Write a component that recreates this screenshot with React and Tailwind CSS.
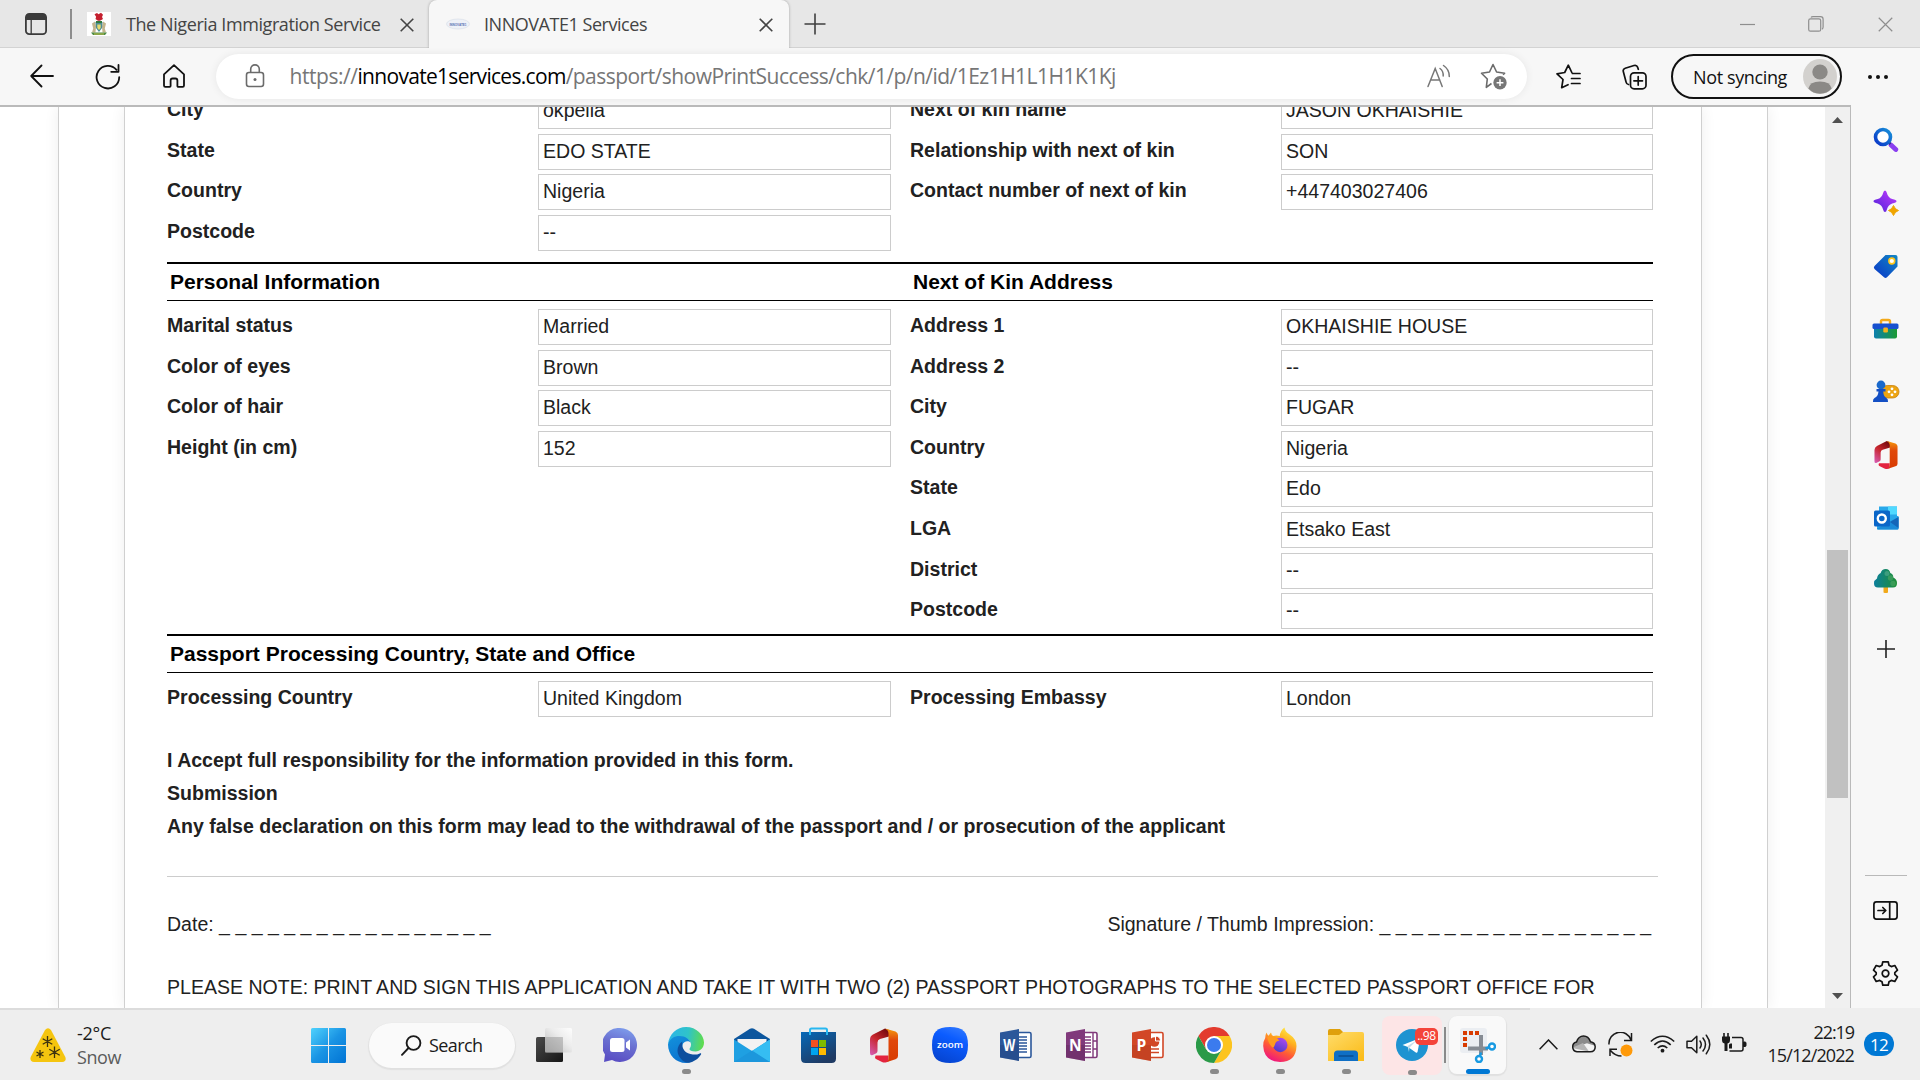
import React from "react";

const UI = "font-['Open_Sans','Noto_Sans',sans-serif]";

/* ---------- browser chrome ---------- */

function Cross({ size = 14, className = "", w = 1.6 }) {
  return (
    <svg width={size} height={size} viewBox="0 0 14 14" className={className} fill="none" stroke="currentColor" strokeWidth={w}>
      <path d="M0.7 0.7 13.3 13.3M13.3 0.7 0.7 13.3" />
    </svg>
  );
}

function TabStrip() {
  return (
    <div className="flex h-12 shrink-0 items-center bg-[#e7e7e7] text-[#444] shadow-[inset_0_-1px_0_#d3d3d3]">
      <svg className="ml-[25px] shrink-0" width="22" height="22" viewBox="0 0 22 22" fill="none">
        <rect x="0.9" y="0.9" width="20.2" height="20.2" rx="3.4" stroke="#3b3b3b" strokeWidth="1.8" />
        <path d="M1 7V4a3 3 0 0 1 3-3h14a3 3 0 0 1 3 3v3z" fill="#3b3b3b" />
        <path d="M6.2 6v15" stroke="#3b3b3b" strokeWidth="1.3" />
      </svg>
      <div className="ml-[23px] h-[30px] w-[2px] shrink-0 bg-[#8d8d8d]" />
      <svg className="ml-[15px] shrink-0" width="24" height="24" viewBox="0 0 24 24">
        <rect width="24" height="24" fill="#fff" />
        <path d="M7.5 2.2 10 1l1.5 1.2L14 .8l2 2-1 2.2 1 2-3 1.8h-2L8.500 7l.6-2.300z" fill="#c4202f" />
        <path d="M5 11.500 8 9.500l1 5-.5 6H5l1.200-4zM19 11.500 16 9.500l-1 5 .5 6H19l-1.200-4z" fill="#c3b48c" />
        <path d="M8.500 10h7l-.5 6-3 4-3-4z" fill="#4d8d94" />
        <path d="M9 9h6v2H9z" fill="#2f7a3d" />
        <path d="M10.300 12.500h3.400v3.500l-1.700 2-1.700-2z" fill="#e6dc70" />
        <path d="M4 20.500h16l-2 2.500H6z" fill="#4d8c46" />
        <path d="M7 21.500h10v1H7z" fill="#c9c04c" />
      </svg>
      <span className="ml-[15px] w-[260px] shrink-0 whitespace-nowrap text-[18px] leading-6 tracking-[-0.415px]">
        The Nigeria Immigration Service
      </span>
      <Cross className="ml-[14px] mt-[2px] shrink-0" size={14} />
      <div className="ml-[15px] flex h-12 w-[360px] shrink-0 items-center rounded-t-lg bg-[#f7f7f7] shadow-[0_0_3px_rgba(0,0,0,0.3)] [clip-path:inset(0_-4px_0_-4px)]">
        <svg className="ml-[17px] shrink-0" width="24" height="12" viewBox="0 0 24 12">
          <ellipse cx="12" cy="6" rx="11.500" ry="5" fill="#eef1f7" stroke="#d5dbe6" strokeWidth="0.6" />
          <text x="12" y="7.500" textAnchor="middle" fontSize="4.200" fontWeight="700" fontFamily="Liberation Sans" fill="#5a70b3" textLength="17" lengthAdjust="spacingAndGlyphs">INNOVATE1</text>
        </svg>
        <span className="ml-[14px] w-[270px] whitespace-nowrap text-[18px] leading-6 tracking-[-0.462px]">INNOVATE1 Services</span>
        <Cross className="ml-[5px] mt-[2px] shrink-0" size={14} />
      </div>
      <svg className="ml-[15px] shrink-0" width="22" height="22" viewBox="0 0 22 22" stroke="#3f3f3f" strokeWidth="1.600">
        <path d="M11 0.500v21M0.500 11h21" />
      </svg>
      <div className="ml-auto flex items-center text-[#8e8e8e]">
        <svg width="15" height="15" viewBox="0 0 15 15" stroke="currentColor" strokeWidth="1.200"><path d="M0 7.500h15" /></svg>
        <svg className="ml-[53px]" width="16" height="16" viewBox="0 0 16 16" fill="none" stroke="currentColor" strokeWidth="1.200">
          <rect x="0.700" y="2.800" width="12" height="12.400" rx="1.800" />
          <path d="M3 1.500Q3.500.7 5 .7h7.500a2.600 2.600 0 0 1 2.600 2.600V11q0 1.500-1 2.200" />
        </svg>
        <Cross className="ml-[54px] mr-[27px]" size={15} w={1.1} />
      </div>
    </div>
  );
}

function Toolbar() {
  return (
    <div className="flex h-[57px] shrink-0 items-center bg-[#f7f7f7] text-[#111]">
      <svg className="ml-[30px] -mt-px shrink-0" width="24" height="24" viewBox="0 0 24 24" fill="none" stroke="currentColor" strokeWidth="1.800" strokeLinecap="round" strokeLinejoin="round">
        <path d="M23 12H1.200M11.500 1.500 1.200 12l10.300 10.500" />
      </svg>
      <svg className="ml-[41px] shrink-0" width="26" height="26" viewBox="0 0 26 26" fill="none" stroke="currentColor" strokeWidth="1.800" strokeLinecap="round" strokeLinejoin="round">
        <path d="M24.200 13.200A11.300 11.300 0 1 1 21.500 5.800M23.500 1v6.800h-7.300" />
      </svg>
      <svg className="ml-[42px] -mt-px shrink-0" width="22" height="24" viewBox="0 0 22 24" fill="none" stroke="currentColor" strokeWidth="1.800" strokeLinejoin="round">
        <path d="M1 10.300 11 1.200l10 9.100V21.500a1.300 1.300 0 0 1-1.300 1.300h-4.400a.9.9 0 0 1-.9-.9v-5.400q0-2-2-2h-2.800q-2 0-2 2v5.400a.9.9 0 0 1-.9.900H2.300A1.300 1.300 0 0 1 1 21.500z" />
      </svg>
      <div className="ml-[31px] flex h-[45px] w-[1311px] shrink-0 items-center rounded-full bg-white shadow-[0_0_8px_rgba(0,0,0,0.07)]">
        <svg className="ml-[29px] -mt-[2px] shrink-0" width="20" height="24" viewBox="0 0 20 24" fill="none" stroke="#6b6b6b" strokeWidth="1.600">
          <rect x="1.500" y="8.500" width="17" height="14" rx="2.400" />
          <path d="M5.700 8.500V5.200a4.300 4.300 0 0 1 8.600 0v3.300" />
          <circle cx="10" cy="15.500" r="1.500" fill="#6b6b6b" stroke="none" />
        </svg>
        <div className="ml-[24.500px] -mt-[2px] flex w-[1123.500px] whitespace-nowrap text-[21px] leading-7 text-[#767676]">
          <span className="tracking-[-0.453px]">https://</span>
          <span className="tracking-[-0.7px] text-black">innovate1services.com</span>
          <span className="tracking-[-0.535px]">/passport/showPrintSuccess/chk/1/p/n/id/1Ez1H1L1H1K1Kj</span>
        </div>
        <svg className="ml-[14px] -mt-px shrink-0" width="24" height="24" viewBox="0 0 24 24" fill="none" stroke="#777" strokeWidth="1.500" strokeLinecap="round">
          <path d="M1 22.500 8.200 4.500 15.200 22.500M3.600 16h9.200M13 4.500q3.500 2.500 3.200 7.500M16.500 1.500q6 4 5.800 11" />
        </svg>
        <svg className="ml-[29px] shrink-0" width="28" height="27" viewBox="0 0 28 27" fill="none" stroke="#6b6b6b" strokeWidth="1.600" strokeLinejoin="round">
          <path d="M11.500 20.500 6.300 24.300 7.300 16 1.500 10.300 9.500 9 13 1.500 16.600 9l8 1.300-1.500 1.500" />
          <circle cx="20" cy="19.700" r="6.700" fill="#767676" stroke="none" />
          <path d="M20 16.300v6.800M16.600 19.700h6.800" stroke="#fff" strokeWidth="1.500" />
        </svg>
      </div>
      <svg className="ml-[29px] shrink-0" width="25" height="25" viewBox="0 0 25 25" fill="none" stroke="currentColor" strokeWidth="1.700" strokeLinejoin="round" strokeLinecap="round">
        <path d="M12 20.700 5.700 23.700 7 15.500 1 9.800 8.700 8.500 12.300 1.200 15.800 8.500M16.500 9.500H24M15.500 14.500H24M15.500 19.500H24" />
      </svg>
      <svg className="ml-[41px] shrink-0" width="25" height="26" viewBox="0 0 25 26" fill="none" stroke="currentColor" strokeWidth="1.700" strokeLinejoin="round" strokeLinecap="round">
        <rect x="8.500" y="8.800" width="15.500" height="16" rx="3.600" />
        <path d="M16.200 12.500v8.600M11.900 16.800h8.600M6.500 20.500q-2-.3-2.500-2.700L1.300 7.500Q.7 5 3.200 4.200L12 1.500q2.800-.7 3.700 1.900l.6 1.900" />
      </svg>
      <div className="ml-[24px] flex h-[45px] w-[171px] shrink-0 items-center rounded-full border-2 border-[#111] text-[18px] tracking-[-0.37px]">
        <span className="ml-[20px] w-[110px] whitespace-nowrap leading-6">Not syncing</span>
        <svg width="34" height="35" viewBox="0 0 34 35" className="shrink-0">
          <ellipse cx="17" cy="17.500" rx="17" ry="17.500" fill="#d3d1ce" />
          <ellipse cx="17" cy="13" rx="7.700" ry="7.600" fill="#8b8986" />
          <path d="M5.300 29.500q1.500-7 11.700-7t11.700 7Q24 34.700 17 34.700T5.300 29.500z" fill="#8b8986" />
        </svg>
      </div>
      <div className="ml-[26px] flex gap-[4px]">
        <i className="size-[4px] rounded-full bg-[#111]" />
        <i className="size-[4px] rounded-full bg-[#111]" />
        <i className="size-[4px] rounded-full bg-[#111]" />
      </div>
    </div>
  );
}

/* ---------- form page ---------- */

function Field({ label, value, wide }) {
  return (
    <div className="flex h-[40.6px]">
      <div className="w-[371px] font-bold leading-8 whitespace-nowrap">{label}</div>
      <div className={(wide ? "w-[372px]" : "w-[353px]") + " h-9 border border-[#ccc] pl-[4px] leading-8"}>{value}</div>
    </div>
  );
}

function Columns({ left, right }) {
  return (
    <div className="flex">
      <div className="w-[743px]">{left.map(([l, v]) => <Field key={l} label={l} value={v} />)}</div>
      <div>{right.map(([l, v]) => <Field key={l} label={l} value={v} wide />)}</div>
    </div>
  );
}

function Heading({ left, right }) {
  return (
    <div className="mb-2 flex h-[39px] w-[1486px] items-center border-t-2 border-b border-black pl-[3px] text-[21px] font-bold text-black">
      <div className="w-[743px] whitespace-nowrap">{left}</div>
      <div className="whitespace-nowrap">{right}</div>
    </div>
  );
}

const DASHES = "_ _ _ _ _ _ _ _ _ _ _ _ _ _ _ _ _";

function FormPage() {
  return (
    <div className="min-w-0 flex-1 overflow-hidden bg-white pr-[57px] pl-[58px]">
      <div className="h-full border-x border-[#d0d0d0] px-[65px] shadow-[0_0_14px_rgba(0,0,0,0.07)]">
        <div className="flow-root h-full border-x border-[#d0d0d0] pl-[42px] shadow-[0_0_14px_rgba(0,0,0,0.07)]">
          <div className="-mt-[14px] flow-root font-['Liberation_Sans',sans-serif] text-[19.550px] text-[#212121]">
            <div className="h-[169px]">
              <Columns
                left={[["City", "okpella"], ["State", "EDO STATE"], ["Country", "Nigeria"], ["Postcode", "--"]]}
                right={[["Next of kin name", "JASON OKHAISHIE"], ["Relationship with next of kin", "SON"], ["Contact number of next of kin", "+447403027406"]]}
              />
            </div>
            <Heading left="Personal Information" right="Next of Kin Address" />
            <div className="h-[325px]">
              <Columns
                left={[["Marital status", "Married"], ["Color of eyes", "Brown"], ["Color of hair", "Black"], ["Height (in cm)", "152"]]}
                right={[["Address 1", "OKHAISHIE HOUSE"], ["Address 2", "--"], ["City", "FUGAR"], ["Country", "Nigeria"], ["State", "Edo"], ["LGA", "Etsako East"], ["District", "--"], ["Postcode", "--"]]}
              />
            </div>
            <Heading left="Passport Processing Country, State and Office" />
            <Columns left={[["Processing Country", "United Kingdom"]]} right={[["Processing Embassy", "London"]]} />
            <div className="mt-[22.400px] font-bold leading-[33px]">
              <p>I Accept full responsibility for the information provided in this form.</p>
              <p>Submission</p>
              <p>Any false declaration on this form may lead to the withdrawal of the passport and / or prosecution of the applicant</p>
            </div>
            <div className="mt-[33px] h-px w-[1491px] bg-[#ccc]" />
            <div className="mt-[31px] flex w-[1484px] justify-between leading-8">
              <span>Date: {DASHES}</span>
              <span>Signature / Thumb Impression: {DASHES}</span>
            </div>
            <p className="mt-[31px] whitespace-nowrap leading-8">
              PLEASE NOTE: PRINT AND SIGN THIS APPLICATION AND TAKE IT WITH TWO (2) PASSPORT PHOTOGRAPHS TO THE SELECTED PASSPORT OFFICE FOR
            </p>
          </div>
        </div>
      </div>
    </div>
  );
}

function Scrollbar() {
  return (
    <div className="flex w-[25px] shrink-0 flex-col items-center bg-[#f0f0f0]">
      <svg className="mt-[10px] shrink-0" width="11" height="6" viewBox="0 0 11 6"><path d="M0 6 5.500 0 11 6z" fill="#505050" /></svg>
      <div className="mt-[427px] h-[248px] w-[21px] bg-[#c1c1c1]" />
      <svg className="mt-auto mb-[9px] shrink-0" width="11" height="6" viewBox="0 0 11 6"><path d="M0 0h11L5.500 6z" fill="#505050" /></svg>
    </div>
  );
}

/* ---------- edge sidebar ---------- */

function OfficeLogo({ w, h, id }) {
  return (
    <svg width={w} height={h} viewBox="0 0 28 34">
      <defs>
        <linearGradient id={id + "a"} x1="0.700" y1="0" x2="0.100" y2="1">
          <stop offset="0" stopColor="#7a0c12" /><stop offset="0.450" stopColor="#c8262c" /><stop offset="1" stopColor="#d65bb0" />
        </linearGradient>
        <linearGradient id={id + "b"} x1="0" y1="0" x2="0" y2="1">
          <stop offset="0" stopColor="#f59a0c" /><stop offset="0.350" stopColor="#e0480a" /><stop offset="1" stopColor="#d83b01" />
        </linearGradient>
      </defs>
      <path d="M0 11Q0 7.500 3 6L15 0l4 1.500V8l-9 2.500q-2.500.7-2.500 3.500v8.500q0 1.500-1.200 2.200L2.700 26.500Q0 27.500 0 24.500z" fill={`url(#${id}a)`} />
      <path d="M5.500 27h13v6L15.500 34q-2 .2-3.500-.5L6 30.500q-1.700-1-.5-3.500z" fill="#e3243f" />
      <path d="M15 0 25.500 3Q28 4 28 6.500v21q0 2.500-2.500 3.300L15.500 34q3-.8 3-4.500V5q0-3.500-3.500-5z" fill={`url(#${id}b)`} />
    </svg>
  );
}

const sideIcons = [
  <svg width="26" height="26" viewBox="0 0 26 26">
    <defs><linearGradient id="mg" x1="0" y1="1" x2="1" y2="0"><stop stopColor="#0a35c8" /><stop offset="1" stopColor="#1890d8" /></linearGradient></defs>
    <path d="m18 18 4.800 4.500" stroke="#8a3ff0" strokeWidth="4.800" strokeLinecap="round" />
    <path d="m15 14.500 2.500 2.500" stroke="#2f2d80" strokeWidth="2.500" />
    <circle cx="10" cy="10" r="7.500" fill="#fff" stroke="url(#mg)" strokeWidth="3.600" />
  </svg>,
  <svg width="26" height="26" viewBox="0 0 26 26">
    <defs><linearGradient id="sp" x1="0" y1="1" x2="1" y2="0"><stop stopColor="#4b22d8" /><stop offset="1" stopColor="#c63cff" /></linearGradient></defs>
    <path d="M12 .5q1.300 0 1.900 2.500 1.100 4.700 5.300 6 4.300.8 4.300 2.200T19.200 13.400q-4.200 1.400-5.300 6.100-.6 2.500-1.900 2.500t-1.900-2.500q-1.100-4.700-5.300-6.100Q.5 12.600.5 11.200T4.800 9q4.200-1.300 5.300-6Q10.700.5 12 .5z" fill="url(#sp)" />
    <path d="M20.500 15.500q1.500 4 5 5-3.500 1-5 5-1.500-4-5-5 3.500-1 5-5z" fill="#f0a500" stroke="#f0a500" strokeWidth="1" strokeLinejoin="round" />
  </svg>,
  <svg width="26" height="26" viewBox="0 0 26 26">
    <defs><linearGradient id="tg" x1="0" y1="1" x2="1" y2="0"><stop stopColor="#0a35c8" /><stop offset="1" stopColor="#1287c4" /></linearGradient></defs>
    <path d="M12.500 2h10q2 0 2 2v9.500L14 24.300q-1.500 1.400-3 0L1.500 16q-1.300-1.400 0-3z" fill="url(#tg)" />
    <circle cx="18.800" cy="8" r="2.900" fill="#fff" stroke="#ffc61a" strokeWidth="1.600" />
  </svg>,
  <svg width="27" height="22" viewBox="0 0 27 22">
    <defs><linearGradient id="tb"><stop stopColor="#0d7fae" /><stop offset="1" stopColor="#1c9a33" /></linearGradient></defs>
    <path d="M9 6V3.500Q9 2 10.500 2h6Q18 2 18 3.500V6" fill="none" stroke="#f3a919" strokeWidth="2.400" />
    <path d="M2 9h23v9.500q0 2-2 2H4q-2 0-2-2z" fill="url(#tb)" />
    <rect x="0.500" y="5.500" width="26" height="5.500" rx="1.500" fill="#1750cf" />
    <rect x="11.300" y="9.500" width="4.600" height="5" rx="1.200" fill="#f5b21d" />
  </svg>,
  <svg width="28" height="24" viewBox="0 0 28 24">
    <rect x="9" y="5.500" width="18" height="12.500" rx="6.200" fill="#eda411" stroke="#c9820b" strokeWidth="0.800" />
    <g fill="#fff"><circle cx="20" cy="8.800" r="1.400" /><circle cx="20" cy="14.800" r="1.400" /><circle cx="17" cy="11.800" r="1.400" /><circle cx="23" cy="11.800" r="1.400" /></g>
    <circle cx="9" cy="5" r="4.400" fill="#1a69cc" />
    <path d="M4.500 9h9v2.500h-2.300q.3 5 3.300 6.500 1.800 1 1.500 4H1q-.3-3 1.500-4 3.500-1.500 4-6.500h-2z" fill="#144fc4" />
  </svg>,
  <OfficeLogo w={24} h={28} id="so" />,
  <svg width="26" height="26" viewBox="0 0 26 26">
    <path d="M6 1.500h18v12H6z" fill="#28a8ea" /><path d="M15 1.500h9v8h-9z" fill="#50d9ff" />
    <path d="M4 11h21.500v12.500q0 1-1 1H5q-1 0-1-1z" fill="#28a8ea" /><path d="M4 23.500 25.500 12v11.500q0 1-1 1H5q-1 0-1-1z" fill="#1a8bd8" /><path d="m17 17 8.500-5v11z" fill="#1466b8" />
    <rect x="1" y="5.500" width="16" height="16" rx="1.500" fill="#0a66c8" />
    <circle cx="8.800" cy="13.500" r="4" fill="none" stroke="#fff" strokeWidth="2.400" />
  </svg>,
  <svg width="26" height="26" viewBox="0 0 26 26">
    <defs><linearGradient id="tr"><stop stopColor="#0c7f9c" /><stop offset="1" stopColor="#1f8f35" /></linearGradient></defs>
    <path d="M10.500 19h4.500v5.500q-2.200 1-4.500 0z" fill="#f1a91b" />
    <path d="M12.800 1q3.700 0 4.500 4 3.200 1 3 4.500 3.700 1.500 3.700 5.500 0 4.500-4 4.500H5q-4 0-4-4.300 0-3 3-4.700.3-3.700 3.700-5.500Q8.700 1 12.800 1z" fill="url(#tr)" />
    <circle cx="14" cy="5.500" r="2.500" fill="#4ea78a" opacity="0.700" /><circle cx="17.500" cy="10" r="2.700" fill="#4ea764" opacity="0.600" /><circle cx="20" cy="15.500" r="2.700" fill="#4ea764" opacity="0.600" />
  </svg>,
  <svg width="18" height="18" viewBox="0 0 18 18" stroke="#222" strokeWidth="1.600"><path d="M9 0v18M0 9h18" /></svg>,
];

function Sidebar() {
  return (
    <div className="flex w-[69px] shrink-0 flex-col items-center bg-[#f7f7f7] pt-[3.500px]">
      {sideIcons.map((ic, i) => (
        <div key={i} className={(i === 8 ? "mt-[5px] " : "") + "flex h-[63px] w-full items-center justify-center"}>{ic}</div>
      ))}
      <div className="mt-auto h-px w-[42px] bg-[#b9b9b9]" />
      <svg className="mt-[25px] shrink-0" width="25" height="19" viewBox="0 0 25 19" fill="none" stroke="#111" strokeWidth="1.700" strokeLinecap="round" strokeLinejoin="round">
        <rect x="0.900" y="0.900" width="23.200" height="17.200" rx="2.500" /><path d="M16.700 1v17M5 9.500h7.500M9.800 6.500l3 3-3 3" />
      </svg>
      <svg className="mt-[40px] mb-[21px] shrink-0" width="27" height="27" viewBox="0 0 27 27" fill="none" stroke="#111" strokeWidth="1.700" strokeLinejoin="round">
        <path d="M10.800 1.800h5.400l.8 3.500 2.300 1.300 3.500-1.100 2.700 4.700-2.700 2.500v1.600l2.700 2.500-2.700 4.700-3.500-1.100-2.300 1.300-.8 3.500h-5.400L10 21.700l-2.300-1.300-3.500 1.100-2.700-4.700 2.700-2.500v-1.600L1.500 10.200l2.700-4.700 3.500 1.100L10 5.300z" />
        <circle cx="13.500" cy="13.500" r="3.300" />
      </svg>
    </div>
  );
}

/* ---------- taskbar ---------- */

function DocLogo({ letter, color, dark, children }) {
  return (
    <svg width="32" height="32" viewBox="0 0 32 32">
      <rect x="17" y="3.500" width="14" height="25" rx="1.500" fill="#fff" stroke={color} strokeWidth="1.600" />
      {children}
      <path d="M0 3.500 19 0v32L0 28.500z" fill={color} />
      <path d="M0 16h19v16L0 28.500z" fill={dark} opacity="0.350" />
      <text x="9.300" y="21.800" textAnchor="middle" fontSize="15.500" fontWeight="700" fontFamily="Open Sans" fill="#fff" textLength={letter === "W" ? 12 : undefined} lengthAdjust="spacingAndGlyphs">{letter}</text>
    </svg>
  );
}

const apps = [
  { icon: (
    <svg width="36" height="36" viewBox="0 0 36 36">
      <defs>
        <linearGradient id="tv1" x1="0" y1="0" x2="1" y2="1"><stop stopColor="#4a4a4a" /><stop offset="1" stopColor="#161616" /></linearGradient>
        <linearGradient id="tv2" x1="0" y1="1" x2="1" y2="0"><stop stopColor="#b5b5b5" /><stop offset="0.600" stopColor="#ececec" /><stop offset="1" stopColor="#fff" /></linearGradient>
      </defs>
      <rect x="0" y="10" width="27" height="25" rx="1.500" fill="url(#tv1)" />
      <rect x="9" y="1" width="27" height="24.500" rx="1.500" fill="url(#tv2)" opacity="0.920" />
      <path d="M9 10h18v15.500H9z" fill="#9e9e9e" opacity="0.450" />
    </svg>) },
  { icon: (
    <svg width="34" height="34" viewBox="0 0 34 34">
      <defs><linearGradient id="ch" x1="0.800" y1="0" x2="0.500" y2="1"><stop stopColor="#7fa0ee" /><stop offset="0.500" stopColor="#6a6fd0" /><stop offset="1" stopColor="#5a4fc4" /></linearGradient></defs>
      <path d="M17 0a17 17 0 1 1-8 32L1 34l1-7.500A17 17 0 0 1 17 0z" fill="url(#ch)" />
      <rect x="7" y="10" width="14.500" height="14" rx="2.500" fill="#fff" /><path d="M23 14.500 27 11.500v11l-4-3z" fill="#fff" />
    </svg>) },
  { run: true, icon: (
    <svg width="36" height="36" viewBox="0 0 36 36">
      <defs>
        <linearGradient id="e1" x1="0" y1="0.300" x2="1" y2="0.400"><stop stopColor="#2bb5e8" /><stop offset="0.550" stopColor="#2fc3c9" /><stop offset="1" stopColor="#5fdc4e" /></linearGradient>
        <linearGradient id="e2" x1="0" y1="0" x2="0.400" y2="1"><stop stopColor="#1392dc" /><stop offset="1" stopColor="#0c73cf" /></linearGradient>
      </defs>
      <path d="M0 17.500C1 6.500 9 0 18 0c10.500 0 18 8 18 15.500C36 21 32 24.500 27.500 24.500c-4 0-6-1.200-6-2.300 0-1.200 1.500-2 1.500-4.700 0-4-4-7-9-7C8 10.500 2.500 13 0 17.500z" fill="url(#e1)" />
      <path d="M0 17.500C1.500 11.500 6.500 9 11.500 9c6 0 10.500 3.500 11 6.500-1.500-2.200-7-2-8 2.500C13 25 18 32 26 33.500 23 35.200 20.500 36 18 36 8 36 0 28 0 17.500z" fill="url(#e2)" />
      <path d="M14.300 14.500c-3 2-4.800 5.500-4.800 9 0 6 5 11.500 10.500 12.300 5.500-.5 10.500-4 13-8.300.5-1-.3-1.500-1.200-1.100-2 1-4.500 1.400-7 1.100C18 27 13 22 14.300 14.500z" fill="#0e4f9e" />
    </svg>) },
  { icon: (
    <svg width="36" height="34" viewBox="0 0 36 34">
      <path d="M0 11 16 .8q2-1.200 4 0L36 11v12H0z" fill="#0c569e" />
      <path d="M3.500 11h29v12H3.500z" fill="#f2f2f2" />
      <path d="M36 11.500 18 23 0 11.500V34h36z" fill="#1fa0e2" /><path d="M36 11.500 18 23l17 11h1z" fill="#35bdf2" /><path d="M18 22.500 36 34H0z" fill="#1c97dc" />
    </svg>) },
  { icon: (
    <svg width="35" height="36" viewBox="0 0 35 36">
      <defs><linearGradient id="st" x1="0" y1="0" x2="0.600" y2="1"><stop stopColor="#0669b8" /><stop offset="1" stopColor="#1f3a63" /></linearGradient></defs>
      <path d="M0 5h35v26.500q0 4.500-4.500 4.500h-26Q0 36 0 31.500z" fill="url(#st)" />
      <path d="M9 8V3q0-1.500 1.500-1.500h14Q26 1.500 26 3v5" fill="none" stroke="#28b7f0" strokeWidth="2" />
      <path d="M10 13h7v7h-7z" fill="#f25022" /><path d="M18 13h7v7h-7z" fill="#7fba00" /><path d="M10 21h7v7h-7z" fill="#00a4ef" /><path d="M18 21h7v7h-7z" fill="#ffb900" />
    </svg>) },
  { icon: <OfficeLogo w={28} h={35} id="to" /> },
  { icon: (
    <svg width="36" height="36" viewBox="0 0 36 36">
      <defs><linearGradient id="zm" x1="0.800" y1="0" x2="0.400" y2="1"><stop stopColor="#2f78ff" /><stop offset="0.350" stopColor="#0b5cff" /><stop offset="1" stopColor="#0645d2" /></linearGradient></defs>
      <path d="M18 0c13 0 18 5 18 18s-5 18-18 18S0 31 0 18 5 0 18 0z" fill="url(#zm)" />
      <text x="18" y="20.500" textAnchor="middle" fontSize="9.500" fontWeight="600" fontFamily="Open Sans" fill="#fff" textLength="26" lengthAdjust="spacingAndGlyphs">zoom</text>
    </svg>) },
  { icon: (
    <DocLogo letter="W" color="#2b579a" dark="#1f4078">
      <path d="M19 8h8M19 11h8M19 14h8M19 17h8M19 20h8M19 23h8" stroke="#2b579a" strokeWidth="1.400" />
    </DocLogo>) },
  { icon: (
    <DocLogo letter="N" color="#80397b" dark="#5a2656">
      <path d="M19 8h6M19 11h6M19 14h6M19 17h6M19 20h6M19 23h6M27 4v24M27 12h4M27 20h4" stroke="#80397b" strokeWidth="1.400" />
    </DocLogo>) },
  { icon: (
    <DocLogo letter="P" color="#d24726" dark="#b03a1d">
      <path d="M19 20h8M19 23.500h8" stroke="#d24726" strokeWidth="1.500" />
      <circle cx="22.500" cy="13" r="4.800" fill="#d24726" /><path d="M23.500 12V7q5 .5 5 5z" fill="#d24726" stroke="#fff" strokeWidth="1" />
    </DocLogo>) },
  { run: true, icon: (
    <svg width="36" height="36" viewBox="0 0 36 36">
      <path d="M2.400 9A18 18 0 0 1 33.600 9L18 9.500 10.200 22.500z" fill="#e33b2e" />
      <path d="M33.600 9A18 18 0 0 1 18 36l7.800-13.500L18 9z" fill="#fcc41f" />
      <path d="M2.400 9A18 18 0 0 0 18 36l7.800-13.500H10.200z" fill="#2a9a48" />
      <circle cx="18" cy="18" r="9" fill="#fff" /><circle cx="18" cy="18" r="7" fill="#3b7bee" />
    </svg>) },
  { run: true, icon: (
    <svg width="36" height="36" viewBox="0 0 36 36">
      <defs>
        <linearGradient id="ff" x1="0.800" y1="0" x2="0.300" y2="1"><stop stopColor="#fff04a" /><stop offset="0.350" stopColor="#ffb01f" /><stop offset="0.650" stopColor="#ff5a36" /><stop offset="1" stopColor="#ee1283" /></linearGradient>
        <linearGradient id="fg" x1="0.800" y1="0" x2="0.300" y2="1"><stop stopColor="#b04bf0" /><stop offset="1" stopColor="#4c3bc8" /></linearGradient>
      </defs>
      <path d="M4.500 5.500q.5 2 2 3.200L9 5.500q.3 2.500 2.300 3.500 3-.8 6.500 0Q18 4 22.500.5q.5 4 4.500 6.500 7.500 5 7.500 12Q34 35 18 35 2 34.500 1.200 19q0-5 2-8 0-3 1.300-5.500z" fill="url(#ff)" />
      <circle cx="18.300" cy="18" r="7.200" fill="url(#fg)" />
      <path d="M5 10q7-2.500 12.500 3.500-4 .5-4.500 4-.5 2.500-2.500 3Q7 18 5 10z" fill="#ff9a1f" />
    </svg>) },
  { run: true, icon: (
    <svg width="36" height="34" viewBox="0 0 36 34">
      <defs><linearGradient id="fo" x1="0" y1="0" x2="0.800" y2="1"><stop stopColor="#ffdc6b" /><stop offset="1" stopColor="#fbbd1c" /></linearGradient></defs>
      <path d="M0 3q0-2 2-2h10l3.500 3.500L12 9H0z" fill="#dfa00c" />
      <path d="M0 7h11l4-3h19q2 0 2 2v27H0z" fill="url(#fo)" />
      <path d="M6 33v-7q0-3.500 3.500-3.500h17q3.500 0 3.500 3.500v7z" fill="#0f6fc5" /><path d="M10.500 28h15" stroke="#0a4b8c" strokeWidth="1.400" />
    </svg>) },
];

function Dot() {
  return <i className="absolute bottom-0 h-[5px] w-[9px] rounded-full bg-[#8a8a8a]" />;
}

function Taskbar() {
  return (
    <div className={`flex h-[72px] shrink-0 bg-[#eeeeee] ${UI} text-[18px] text-[#1b1b1b]`}>
      <div className="flex h-full w-[1530px] shrink-0 items-center border-t-2 border-[#dcdcdc]">
        <svg className="ml-[30px] shrink-0 -mt-px" width="36" height="34" viewBox="0 0 36 34">
          <path d="M15 2q3-3.500 6 0L35.300 29q1.500 4.500-3 5H4q-4.500-.5-3.300-5z" fill="#f5c50f" />
          <g stroke="#3c3210" strokeWidth="1.300">
            <path d="M17.500 8v11M12.700 10.700l9.600 5.600M22.300 10.700l-9.600 5.600M10 22v8M6.500 24l7 4M13.500 24l-7 4M24.500 18.500v11.500M19.300 21.200l10.400 6M29.700 21.200l-10.400 6" />
          </g>
        </svg>
        <div className="ml-[11px] w-[234px] leading-6">
          <div className="tracking-[-0.28px]">-2°C</div>
          <div className="tracking-[-0.42px] text-[#5b5b5b]">Snow</div>
        </div>
        <svg className="shrink-0" width="35" height="35" viewBox="0 0 35 35">
          <defs><linearGradient id="wn" x1="0" y1="0" x2="1" y2="1"><stop stopColor="#4fd2fd" /><stop offset="0.500" stopColor="#1a94e4" /><stop offset="1" stopColor="#0073d4" /></linearGradient></defs>
          <path d="M1.500 0H17v17H0V1.500Q0 0 1.500 0zM18 0h15.500Q35 0 35 1.500V17H18zM0 18h17v17H1.500Q0 35 0 33.500zM18 18h17v15.500q0 1.500-1.500 1.500H18z" fill="url(#wn)" />
        </svg>
        <div className="ml-[23px] flex h-[45px] w-[146px] shrink-0 items-center rounded-full bg-[#fafafa] shadow-[0_1px_1px_1px_#e0e0e0]">
          <svg className="ml-[32px] shrink-0" width="21" height="21" viewBox="0 0 21 21" fill="none" stroke="#1b1b1b" strokeWidth="1.900" strokeLinecap="round">
            <circle cx="12.500" cy="8" r="6.900" /><path d="M7.500 13 1 19.800" />
          </svg>
          <span className="ml-[7px] tracking-[-0.6px]">Search</span>
        </div>
        <div className="ml-[6px] flex h-full shrink-0 items-center">
          {apps.map((a, i) => (
            <div key={i} className="relative flex h-[58px] w-[66px] items-center justify-center">
              {a.icon}
              {a.run && <Dot />}
            </div>
          ))}
          <div className="relative ml-[3px] flex h-[59px] w-[60px] items-center justify-center rounded-lg bg-[#fde5e6]">
            <svg width="32" height="32" viewBox="0 0 32 32">
              <circle cx="16" cy="16" r="16" fill="#1f93d1" />
              <path d="m6.500 16 16.500-6.500q1.300-.3 1 1L21.500 23q-.5 1.300-1.700.5L12 18z" fill="#fff" /><path d="m11.500 17 9-5.500-7 7-.5 4.500z" fill="#c3dcea" />
            </svg>
            <span className="absolute top-[12px] left-[33px] flex h-[17px] w-[23px] items-center justify-center rounded-[5px] bg-[#f4433a] text-[12px] leading-none tracking-[-0.4px] text-white">..98</span>
            <Dot />
          </div>
          <div className="ml-[2px] h-9 w-[2px] bg-[#8a8a8a]" />
          <div className="relative ml-[3px] flex h-[58px] w-[57px] items-center justify-center rounded-lg bg-[#f9f9f9] shadow-[0_1px_1px_1px_#e0e0e0]">
            <svg width="36" height="36" viewBox="0 0 36 36" fill="none">
              <rect x="0" y="1" width="27" height="25" rx="3" fill="#ebeef2" />
              <path d="M3 4h4v4H3zM9 4h4v4H9zM15 4h4v4h-4zM3 10h4v4H3zM3 16h4v4H3z" fill="#d83b01" />
              <path d="M21 8v20M8 21.500h20" stroke="#868c94" strokeWidth="4" />
              <circle cx="32" cy="19.500" r="3" stroke="#189ae2" strokeWidth="2.400" fill="#fff" /><circle cx="19" cy="32" r="3" stroke="#189ae2" strokeWidth="2.400" fill="#fff" />
              <path d="m25.500 21.500 3.500-1M21 25.500l-1 3.500" stroke="#189ae2" strokeWidth="2.400" />
            </svg>
            <i className="absolute bottom-0 h-[5px] w-6 rounded-full bg-[#0078d4]" />
          </div>
        </div>
      </div>
      <div className="flex flex-1 items-center">
        <svg className="ml-[9px] shrink-0" width="19" height="11" viewBox="0 0 19 11" fill="none" stroke="#1b1b1b" strokeWidth="1.500"><path d="M.6 10.300 9.500 1l8.900 9.300" /></svg>
        <svg className="ml-[13px] shrink-0" width="25" height="18" viewBox="0 0 25 18">
          <path d="M6 16.800a5 5 0 0 1-.5-9.800Q7.500 1 12.500 1t7 5.800q4.500.7 4.700 5 0 5-5 5z" fill="#f3f3f3" />
          <path d="M1 13q-.2-5 4.500-6Q7.500 1 12.500 1t7 5.800q3.800.5 4.500 4l-8-2.500z" fill="#8b8b8b" /><path d="m1 13 11-5 6 8.500Z" fill="#b4b4b4" />
          <path d="M6 16.800a5 5 0 0 1-.5-9.800Q7.500 1 12.500 1t7 5.800q4.500.7 4.700 5 0 5-5 5z" fill="none" stroke="#1b1b1b" strokeWidth="1.500" />
        </svg>
        <svg className="ml-[12px] shrink-0" width="26" height="25" viewBox="0 0 26 25" fill="none" stroke="#1b1b1b" strokeWidth="1.500">
          <path d="M1 12.500A11.300 11.300 0 0 1 23 8M23.500 1v7.500H16M2 24v-6.800h7M2.500 18.500Q7 24 13.500 24" />
          <circle cx="18.500" cy="18.500" r="6" fill="#ff9a0a" stroke="none" />
        </svg>
        <svg className="ml-[16px] shrink-0" width="25" height="18" viewBox="0 0 25 18" fill="none" stroke="#1b1b1b" strokeWidth="1.600">
          <path d="M.8 6.500Q12.500-4 24.200 6.500M4.300 9.800q8.200-7.600 16.400 0M7.700 13q4.800-4.300 9.600 0" /><circle cx="12.500" cy="15.700" r="1.900" fill="#1b1b1b" stroke="none" />
        </svg>
        <svg className="ml-[11px] shrink-0" width="25" height="21" viewBox="0 0 25 21" fill="none" stroke="#1b1b1b" strokeWidth="1.500" strokeLinejoin="round" strokeLinecap="round">
          <path d="M1 7.300h4.500l5.300-5v16.500l-5.300-5H1zM14 7q2.500 3.500 0 7M17 4q5 6.500 0 13M20.300 1.200q7 9.300 0 18.600" />
        </svg>
        <svg className="ml-[11px] -mt-[2px] shrink-0" width="25" height="20" viewBox="0 0 25 20" fill="none" stroke="#1b1b1b" strokeWidth="1.500">
          <path d="M10 4.500h9q2 0 2 2V16q0 2-2 2H7.500" /><path d="M21.500 9h1.500q1 0 1 1v2.500q0 1-1 1h-1.500z" fill="#1b1b1b" strokeWidth="1" />
          <path d="M7 15.500V12q0-1.500 1.500-1.500H10V15.500z" fill="#1b1b1b" stroke="none" />
          <path d="M0 3.500h8V7q0 3-2.500 3.500V18h-3v-7.500Q0 10 0 7z" fill="#1b1b1b" stroke="none" /><path d="M2 0v4M6 0v4" strokeWidth="1.600" />
        </svg>
        <div className="ml-auto text-right leading-[23.500px]">
          <div className="tracking-[-1.1px]">22:19</div>
          <div className="tracking-[-0.9px]">15/12/2022</div>
        </div>
        <div className="mr-[26px] ml-[10px] flex h-6 w-[30px] items-center justify-center rounded-full bg-[#0078d4] text-[17px] leading-none tracking-[-0.8px] text-white">12</div>
      </div>
    </div>
  );
}

export default function App() {
  return (
    <div className={`flex h-[1080px] w-[1920px] flex-col overflow-hidden bg-[#f7f7f7] ${UI}`}>
      <TabStrip />
      <Toolbar />
      <div className="flex min-h-0 flex-1">
        <div className="flex min-w-0 flex-1 border-t-2 border-r border-[#bababa]">
          <FormPage />
          <Scrollbar />
        </div>
        <Sidebar />
      </div>
      <Taskbar />
    </div>
  );
}
